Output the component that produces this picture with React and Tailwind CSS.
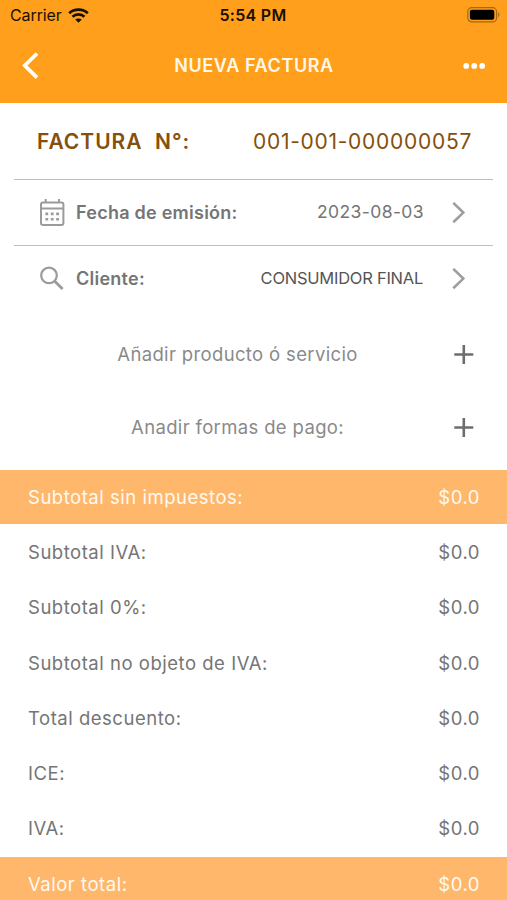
import React from 'react';

const totals = [
  { label: 'Subtotal sin impuestos:', value: '$0.0', highlight: true },
  { label: 'Subtotal IVA:', value: '$0.0' },
  { label: 'Subtotal 0%:', value: '$0.0' },
  { label: 'Subtotal no objeto de IVA:', value: '$0.0' },
  { label: 'Total descuento:', value: '$0.0' },
  { label: 'ICE:', value: '$0.0' },
  { label: 'IVA:', value: '$0.0' },
  { label: 'Valor total:', value: '$0.0', highlight: true },
];

function WifiIcon() {
  return (
    <svg width="21" height="15" viewBox="0 0 21 15" fill="none" stroke="#1a1000" strokeWidth="2.7">
      <path d="M1.2 5.2C6.2.4 14.8.4 19.8 5.2" />
      <path d="M4.5 8.7c3.4-3.1 8.6-3.1 12 0" />
      <path d="M10.5 14.8 7.2 11.6c1.9-1.6 4.7-1.6 6.6 0z" fill="#1a1000" stroke="none" />
    </svg>
  );
}

function BatteryIcon() {
  return (
    <svg width="33" height="16" viewBox="0 0 33 16">
      <rect x="0.8" y="0.7" width="28.8" height="14.2" rx="4" fill="none" stroke="#a46713" strokeWidth="1.2" />
      <rect x="2.9" y="2.8" width="24.4" height="10" rx="2" fill="#000" />
      <path d="M31.2 5.6c1.6.6 1.6 3.8 0 4.4z" fill="#a46713" />
    </svg>
  );
}

function CalendarIcon() {
  return (
    <svg width="26" height="28" viewBox="0 0 26 28" fill="none" stroke="#9b9b9b" strokeWidth="2">
      <rect x="2" y="3.4" width="22.4" height="22.6" rx="2" />
      <path d="M2 9.4h22.4M6.7 0v4M20 0v4" />
      <path d="M6.4 14.9h2.8M11.8 14.9h2.8M17.2 14.9h2.8M6.4 20.3h2.8M11.8 20.3h2.8M17.2 20.3h2.8" strokeWidth="2.6" />
    </svg>
  );
}

function SearchIcon() {
  return (
    <svg width="26" height="26" viewBox="0 0 26 26" fill="none" stroke="#9b9b9b" strokeWidth="2.2">
      <circle cx="10" cy="9.4" r="7.8" />
      <path d="M15.5 14.9 23.6 23" strokeWidth="2.8" />
    </svg>
  );
}

function ChevronRight() {
  return (
    <svg width="14" height="22" viewBox="0 0 14 22" fill="none" stroke="#9e9e9e" strokeWidth="2.6">
      <path d="M1.3.9 11.3 10.6 1.3 20.3" />
    </svg>
  );
}

function PlusIcon() {
  return (
    <svg width="20" height="20" viewBox="0 0 20 20" stroke="#6d6d6d" strokeWidth="2.6">
      <path d="M9.8 0v19M.3 9.5h19" />
    </svg>
  );
}

export default function App() {
  return (
    <div className="h-[900px] w-[507px] overflow-hidden bg-white font-['Inter',sans-serif] text-[#757575]">
      <header className="h-[103px] bg-[#ff9f1c]">
        <div className="grid h-[30px] grid-cols-3 items-center pl-[10px] pr-[7px] text-[#1a1000]">
          <div className="flex items-center gap-[6px]">
            <span className="text-[16px] tracking-[-0.1px]">Carrier</span>
            <WifiIcon />
          </div>
          <span className="pr-[4px] text-center text-[16px] font-semibold tracking-[0.3px]">5:54 PM</span>
          <div className="flex justify-end pb-px">
            <BatteryIcon />
          </div>
        </div>
        <div className="flex h-[71px] items-center justify-between pl-[22px] pr-[21px]">
          <button>
            <svg width="18" height="28" viewBox="0 0 18 28" fill="none" stroke="#fff" strokeWidth="3.8">
              <path d="M15 1.5 2.8 13.5 15 25.7" />
            </svg>
          </button>
          <h1 className="pl-[5px] text-[18px] font-semibold tracking-[0.6px] text-[#fff8e8]">NUEVA FACTURA</h1>
          <button>
            <svg width="23" height="6" viewBox="0 0 23 6" fill="#fff">
              <circle cx="3.2" cy="2.9" r="2.9" />
              <circle cx="11.2" cy="2.9" r="2.9" />
              <circle cx="19.2" cy="2.9" r="2.9" />
            </svg>
          </button>
        </div>
      </header>

      <section className="px-[14px]">
        <div className="flex h-[77px] items-center justify-between border-b border-b-[#d6b8a8] pl-[23px] pr-[21px] pt-[2px] text-[21px] text-[#85500c]">
          <span className="whitespace-pre font-semibold tracking-[0.98px]">{'FACTURA  N°:'}</span>
          <span className="tracking-[0.72px]">001-001-000000057</span>
        </div>
        <div className="flex h-[66px] items-center border-b border-b-[#d6b8a8] pl-[25px] pr-[27px]">
          <CalendarIcon />
          <span className="ml-[11px] text-[18px] font-semibold tracking-[0.25px]">Fecha de emisión:</span>
          <span className="ml-auto mr-[28px] text-[17.5px] tracking-[0.4px]">2023-08-03</span>
          <ChevronRight />
        </div>
        <div className="flex h-[65px] items-center pl-[25px] pr-[27px]">
          <SearchIcon />
          <span className="ml-[11px] text-[18px] font-semibold tracking-[0.25px]">Cliente:</span>
          <span className="ml-auto mr-[29px] text-[16.5px] tracking-[-0.25px] text-[#555]">CONSUMIDOR FINAL</span>
          <ChevronRight />
        </div>
      </section>

      <section className="pt-[7px] text-[18.5px] tracking-[0.35px] text-[#8a8a8a]">
        <div className="flex h-[73px] items-center pr-[33px]">
          <span className="flex-1 pl-[21px] pt-px text-center">Añadir producto ó servicio</span>
          <PlusIcon />
        </div>
        <div className="flex h-[73px] items-center pr-[33px]">
          <span className="flex-1 pl-[21px] pt-px text-center">Anadir formas de pago:</span>
          <PlusIcon />
        </div>
      </section>

      <section className="mt-[6px] space-y-[1.25px] text-[18.5px] tracking-[0.52px]">
        {totals.map((row) => (
          <div
            key={row.label}
            className={`flex h-[54px] items-center justify-between pl-[28px] pr-[27px] pt-[1.5px] ${
              row.highlight ? 'bg-[#ffb76c] text-[#fffaf0]' : ''
            }`}
          >
            <span>{row.label}</span>
            <span>{row.value}</span>
          </div>
        ))}
      </section>
    </div>
  );
}
